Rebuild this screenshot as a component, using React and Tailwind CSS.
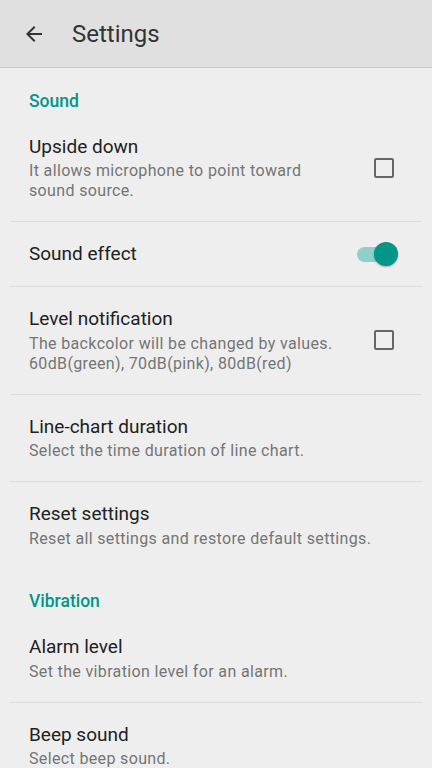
const Divider = () => <div className="h-px bg-[#dedede]" />;

const Category = ({ title }) => (
  <div className="pl-[19px] pt-[22.5px] pb-[4px] text-[17.5px] leading-[20px] font-medium text-[#009688]">
    {title}
  </div>
);

const Checkbox = () => (
  <div className="w-[20px] h-[20px] border-2 border-[#666666] rounded-[2px]" />
);

const Toggle = () => (
  <div className="relative w-[41px] h-[24px] flex items-center">
    <div className="w-[36px] h-[15px] rounded-full bg-[#8fd0c8]" />
    <div className="absolute right-0 top-0 w-[24px] h-[24px] rounded-full bg-[#009688] shadow-[0_1px_2px_rgba(0,0,0,0.3)]" />
  </div>
);

const Row = ({ title, summary, control }) => (
  <div className="flex items-center pl-[19px] pr-[28px] py-[20px]">
    <div className="flex-1">
      <div className="text-[19px] leading-[24px] text-[#212121]">{title}</div>
      {summary && (
        <div className="mt-[2.5px] text-[16px] tracking-[0.35px] leading-[20px] text-[#757575]">{summary}</div>
      )}
    </div>
    {control}
  </div>
);

const App = () => {
  return (
    <div className="w-[432px] h-[768px] overflow-hidden bg-[#eeeeee] font-['Roboto',sans-serif]">
      {/* Toolbar */}
      <div className="h-[68px] bg-[#e0e0e0] border-b border-[#c8c8c8] flex items-center">
        <svg className="ml-[22px] w-[24px] h-[24px]" viewBox="0 0 24 24" fill="#333333">
          <path d="M20 11H7.83l5.59-5.59L12 4l-8 8 8 8 1.41-1.41L7.83 13H20v-2z" />
        </svg>
        <div className="ml-[26px] text-[24px] text-[#333333] font-normal">Settings</div>
      </div>

      <div className="mx-[10px]">
        <Category title="Sound" />
        <Row
          title="Upside down"
          summary={<>It allows microphone to point toward<br />sound source.</>}
          control={<Checkbox />}
        />
        <Divider />
        <Row title="Sound effect" control={<div className="-mr-[4px]"><Toggle /></div>} />
        <Divider />
        <Row
          title="Level notification"
          summary={<>The backcolor will be changed by values.<br />60dB(green), 70dB(pink), 80dB(red)</>}
          control={<Checkbox />}
        />
        <Divider />
        <Row title="Line-chart duration" summary="Select the time duration of line chart." />
        <Divider />
        <Row title="Reset settings" summary="Reset all settings and restore default settings." />

        <Category title="Vibration" />
        <Row title="Alarm level" summary="Set the vibration level for an alarm." />
        <Divider />
        <Row title="Beep sound" summary="Select beep sound." />
      </div>
    </div>
  );
};

export default App;
